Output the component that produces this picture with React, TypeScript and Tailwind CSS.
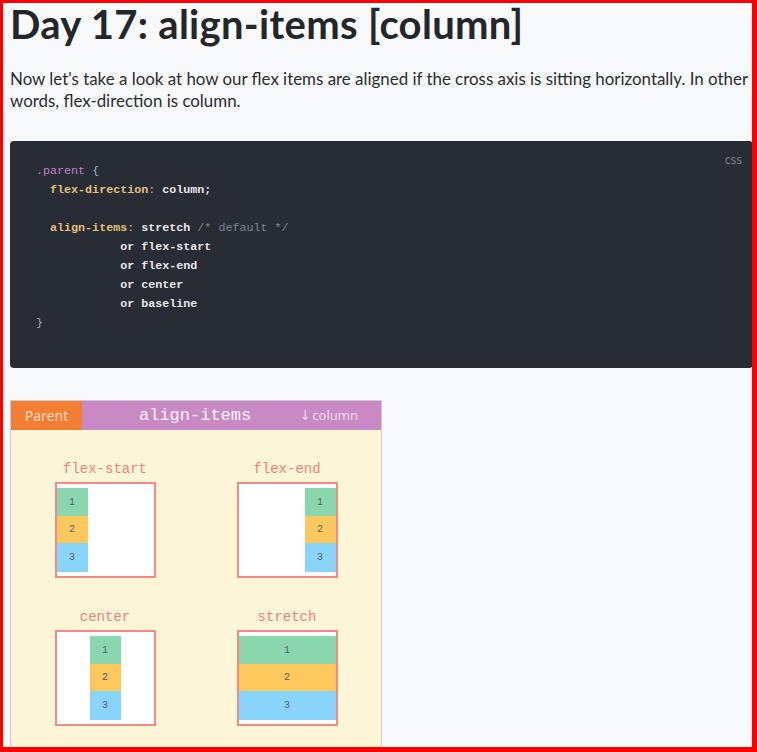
import React from "react";

const mono = { fontFamily: '"Liberation Mono", "DejaVu Sans Mono", monospace' };

function Item({ n, cls }: { n: number; cls: string }) {
  return (
    <div className={`flex items-center justify-center text-[10px] text-[#56606b] ${cls}`} style={mono}>
      {n}
    </div>
  );
}

function Demo({ label, align }: { label: string; align: "start" | "end" | "center" | "stretch" }) {
  const a =
    align === "start" ? "items-start" : align === "end" ? "items-end" : align === "center" ? "items-center" : "items-stretch";
  const w = align === "stretch" ? "" : "w-[31px]";
  return (
    <div className="flex flex-col items-center">
      <div className="text-[14px] leading-[20px] text-[#f08181]" style={mono}>
        {label}
      </div>
      <div className={`mt-[3px] w-[101px] h-[96px] border-2 border-[#f48a86] bg-white flex flex-col ${a} pt-[4px]`}>
        <Item n={1} cls={`${w} h-[28px] bg-[#8ad6ae]`} />
        <Item n={2} cls={`${w} h-[27px] bg-[#fdc95c]`} />
        <Item n={3} cls={`${w} h-[29px] bg-[#89d4fb]`} />
      </div>
    </div>
  );
}

export default function App() {
  return (
    <div className="relative min-h-[752px] h-[752px] overflow-hidden bg-[#f8f9fb]" style={{ fontFamily: 'Lato, "Open Sans", sans-serif' }}>
      <div className="pl-[10px] pr-[4px]">
        <h1 className="text-[40px] leading-[48px] font-bold text-[#23262b] tracking-[0.3px]">
          Day 17: align-items [column]
        </h1>
        <p className="mt-[20px] text-[16.9px] leading-[22px] text-[#2a2d33]">
          Now let's take a look at how our flex items are aligned if the cross axis is sitting horizontally. In other words, flex-direction is column.
        </p>
        <div className="relative mt-[29px] rounded-[4px] bg-[#282c34] pl-[26px] pt-[21px] pb-[35px]">
          <div className="absolute right-[11px] top-[10px] text-[12px] text-[#7c8089]" style={{ fontFamily: '"Noto Sans", sans-serif' }}>
            css
          </div>
          <pre className="text-[11.7px] leading-[19px] text-[#e8e8e8]" style={mono}>
            <span className="text-[#c07fcb]">.parent</span> <span className="text-[#abb2bf]">{"{"}</span>
            {"\n"}
            {"  "}
            <span className="text-[#e5c07b] font-bold">flex-direction</span>
            <span className="text-[#abb2bf]">:</span> <span className="font-bold">column;</span>
            {"\n\n"}
            {"  "}
            <span className="text-[#e5c07b] font-bold">align-items</span>
            <span className="text-[#abb2bf]">:</span> <span className="font-bold">stretch</span>{" "}
            <span className="text-[#7f848e]">/* default */</span>
            {"\n"}
            <span className="font-bold">{"            or flex-start\n            or flex-end\n            or center\n            or baseline"}</span>
            {"\n"}
            <span className="text-[#abb2bf]">{"}"}</span>
          </pre>
        </div>
        <div className="mt-[32px] w-[372px] border border-[#c9ccd6] bg-[#fdf5d8]">
          <div className="flex h-[29px] bg-[#c98ac4]">
            <div className="w-[71px] bg-[#f27f33] flex items-center justify-center text-[14px] text-[#fbdcc0]" style={{ fontFamily: '"Noto Sans", sans-serif' }}>
              Parent
            </div>
            <div className="flex-1 flex items-center pl-[57px]">
              <span className="text-[17px] text-[#fbf0f8]" style={mono}>
                align-items
              </span>
              <span className="ml-auto mr-[23px] flex items-center text-[13px] text-[#efd6ec]" style={{ fontFamily: '"Noto Sans", sans-serif' }}>
                <span className="text-[14px] mr-[1px]" style={{ fontFamily: '"DejaVu Sans", sans-serif' }}>↓</span>column
              </span>
            </div>
          </div>
          <div className="grid grid-cols-2 px-[3px] pt-[29px] gap-y-[29px] pb-[40px]">
            <Demo label="flex-start" align="start" />
            <Demo label="flex-end" align="end" />
            <Demo label="center" align="center" />
            <Demo label="stretch" align="stretch" />
          </div>
        </div>
      </div>
      <div className="pointer-events-none absolute inset-0 border-l-[3px] border-t-[3px] border-r-[5px] border-b-[5px] border-[#ff0000]" />
    </div>
  );
}
